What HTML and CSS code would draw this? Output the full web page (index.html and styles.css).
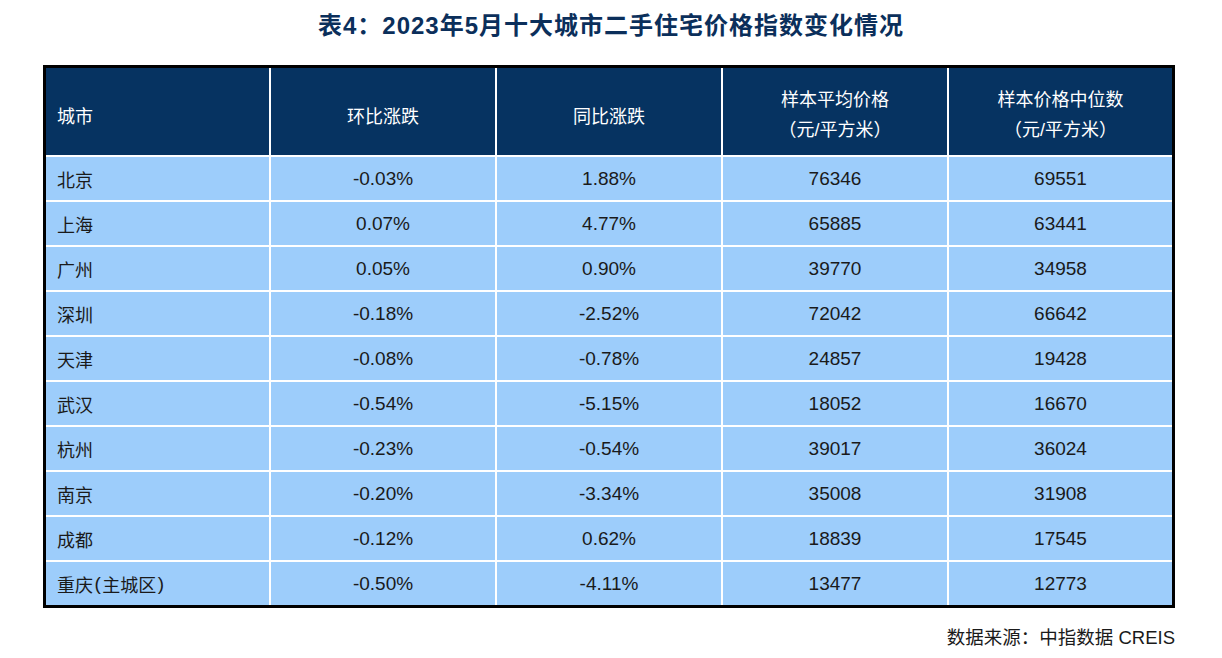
FILE: index.html
```html
<!DOCTYPE html>
<html lang="zh">
<head>
<meta charset="utf-8">
<title>表4</title>
<link rel="stylesheet" href="styles.css">
</head>
<body>
<div class="page">
  <h1 class="title">表4：2023年5月十大城市二手住宅价格指数变化情况</h1>
  <div class="table">
    <div class="cell head left">城市</div>
    <div class="cell head">环比涨跌</div>
    <div class="cell head">同比涨跌</div>
    <div class="cell head two">样本平均价格<br>（元/平方米）</div>
    <div class="cell head two">样本价格中位数<br>（元/平方米）</div>

    <div class="cell left">北京</div><div class="cell num">-0.03%</div><div class="cell num">1.88%</div><div class="cell num">76346</div><div class="cell num">69551</div>
    <div class="cell left">上海</div><div class="cell num">0.07%</div><div class="cell num">4.77%</div><div class="cell num">65885</div><div class="cell num">63441</div>
    <div class="cell left">广州</div><div class="cell num">0.05%</div><div class="cell num">0.90%</div><div class="cell num">39770</div><div class="cell num">34958</div>
    <div class="cell left">深圳</div><div class="cell num">-0.18%</div><div class="cell num">-2.52%</div><div class="cell num">72042</div><div class="cell num">66642</div>
    <div class="cell left">天津</div><div class="cell num">-0.08%</div><div class="cell num">-0.78%</div><div class="cell num">24857</div><div class="cell num">19428</div>
    <div class="cell left">武汉</div><div class="cell num">-0.54%</div><div class="cell num">-5.15%</div><div class="cell num">18052</div><div class="cell num">16670</div>
    <div class="cell left">杭州</div><div class="cell num">-0.23%</div><div class="cell num">-0.54%</div><div class="cell num">39017</div><div class="cell num">36024</div>
    <div class="cell left">南京</div><div class="cell num">-0.20%</div><div class="cell num">-3.34%</div><div class="cell num">35008</div><div class="cell num">31908</div>
    <div class="cell left">成都</div><div class="cell num">-0.12%</div><div class="cell num">0.62%</div><div class="cell num">18839</div><div class="cell num">17545</div>
    <div class="cell left">重庆<span class="paren">(</span>主城区<span class="paren">)</span></div><div class="cell num">-0.50%</div><div class="cell num">-4.11%</div><div class="cell num">13477</div><div class="cell num">12773</div>
  </div>
  <div class="source">数据来源：中指数据 CREIS</div>
</div>
</body>
</html>
```
FILE: styles.css
```css
html, body {
  margin: 0;
  padding: 0;
  background: #ffffff;
}
body {
  font-family: "Liberation Sans", "Noto Sans CJK SC", sans-serif;
  color: #1a1a1a;
}
.page {
  width: 1222px;
  height: 658px;
  padding-top: 11px;
  box-sizing: border-box;
}
.title {
  margin: 0;
  text-align: center;
  font-size: 24px;
  line-height: 30px;
  font-weight: bold;
  color: #0b2f5b;
  letter-spacing: 1px;
}
.table {
  margin: 24px 0 0 43px;
  width: 1132px;
  box-sizing: border-box;
  border: 3px solid #000;
  background: #ffffff;
  display: grid;
  grid-template-columns: 223px 224px 224px 224px 223px;
  grid-template-rows: 87px repeat(10, 43px);
  gap: 2px;
}
.cell {
  background: #9dcdfb;
  display: flex;
  align-items: center;
  justify-content: center;
  font-size: 18px;
  color: #1a1a1a;
  text-align: center;
}
.cell.num {
  font-size: 19px;
}
.cell.left {
  justify-content: flex-start;
  padding-left: 11px;
}
.paren {
  font-size: 19px;
  margin: 0 1.5px;
}
.cell.head {
  background: #063361;
  color: #ffffff;
  padding-top: 7px;
}
.cell.two {
  line-height: 30px;
}
.source {
  margin-top: 20px;
  width: 1175px;
  text-align: right;
  font-size: 18.5px;
  line-height: 20px;
  color: #1a1a1a;
}
```
